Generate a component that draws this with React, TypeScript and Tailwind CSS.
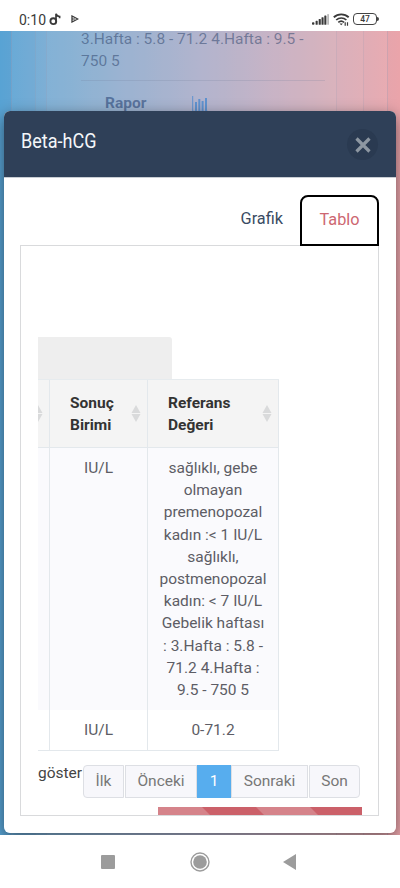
import { ReactNode } from "react";
import clsx from "clsx";

const SortIcon = ({ className }: { className?: string }) => (
  <svg
    viewBox="0 0 10 17"
    className={clsx("h-[17px] w-[10px] shrink-0 fill-[#d9dadb]", className)}
  >
    <path d="M5 0 9.5 8h-9zM5 17 .5 9h9z" />
  </svg>
);

const StatusBar = () => (
  <header className="flex h-[31px] shrink-0 items-start bg-white pl-[19px] pr-[21px] text-[#3a3a3a]">
    <span className="mt-[10px] w-[30px] text-[14px] leading-[20px] whitespace-nowrap">
      0:10
    </span>
    <svg viewBox="0 0 12 13" className="mt-[13px] h-[13px] w-3" fill="none" stroke="currentColor">
      <circle cx="4.3" cy="8.2" r="2.9" strokeWidth="1.9" />
      <path d="M7 8.5V.8c.5 1.7 1.7 2.6 3.6 2.7v1.8" strokeWidth="1.7" />
    </svg>
    <svg viewBox="0 0 8 8" className="mt-[15px] ml-[10px] h-2 w-2" fill="none" stroke="currentColor">
      <path d="M1 1v6l5.8-3z" strokeWidth="1.3" />
      <path d="M1 4h3" strokeWidth="1" />
    </svg>
    <div className="flex-1" />
    <svg viewBox="0 0 18 12" className="mt-[14px] h-3 w-[18px]" fill="currentColor">
      <rect x="0" y="8.3" width="2.4" height="2.5" rx=".8" />
      <rect x="3.6" y="6.8" width="2.1" height="4" rx=".6" />
      <rect x="6.7" y="5" width="2.1" height="5.8" rx=".6" />
      <rect x="9.5" y="3.2" width="2.1" height="7.6" rx=".6" />
      <rect x="12.3" y="1.5" width="2.1" height="9.3" rx=".6" />
      <rect x="15.2" y="0" width="1.8" height="10.8" rx=".6" opacity=".35" />
    </svg>
    <svg viewBox="0 0 18 14" className="mt-[13px] ml-[3px] h-[14px] w-[18px]" fill="none" stroke="currentColor">
      <path d="M.8 4.3a11 11 0 0 1 14.9 0" strokeWidth="1.9" />
      <path d="M3.2 7a7.5 7.5 0 0 1 10.2 0" strokeWidth="1.7" />
      <path d="M5.3 9.4a4.3 4.3 0 0 1 5.8 0" strokeWidth="1.6" />
      <path d="m6.5 10.6 1.7 1.6 1.7-1.6z" fill="currentColor" stroke="none" />
      <path d="M12.2 9.2v3.5M14.5 9.2v3.5" strokeWidth="1.2" />
    </svg>
    <div className="mt-[13px] ml-[2px] flex items-center">
      <div className="flex h-3 w-[24px] items-center justify-center rounded-[4px] border-[1.5px] border-[#444] text-[8.5px] leading-none font-medium">
        47
      </div>
      <div className="h-1 w-[2px] rounded-r bg-[#444]" />
    </div>
  </header>
);

const PageBehind = () => (
  <div className="absolute inset-0 flex bg-linear-to-r from-[#58a3d4] via-[#a5a8c6] to-[#eaa4aa]">
    <div className="flex w-full pr-3 pl-[11px]">
      <div className="flex w-full border-x border-[#8f8fa84d] bg-white/8 pr-[23px] pl-[23px]">
        <div className="flex w-full border-x border-[#8f8fa833] bg-white/4 pr-[26px] pl-[10px]">
          <div className="w-full border-x border-[#8f8fa833] bg-white/4 pr-[11px] pl-[11px] text-[15.5px] text-[#2e446c88]">
            <p className="ml-[23px] h-4 leading-[16px] whitespace-nowrap">
              3.Hafta : 5.8 - 71.2 4.Hafta : 9.5 -
            </p>
            <p className="ml-[23px] pt-[3px] leading-[22px]">750 5</p>
            <div className="mt-[8px] ml-[23px] flex border-t border-[#70779533] pt-[11px] pl-6 leading-[22px]">
              <b className="w-[87px] font-bold text-[#2b487999]">Rapor</b>
              <svg viewBox="0 0 16 16" className="mt-[4px] h-4 w-4" fill="none" stroke="#5f92cf">
                <path d="M.7 0v15.3H16" strokeWidth="1" />
                <path d="M4 15V6M7.3 15V3M10.6 15V5M14 15V2" strokeWidth="2" />
              </svg>
            </div>
          </div>
        </div>
      </div>
    </div>
  </div>
);

const Th = ({ children }: { children: ReactNode }) => (
  <th className="border-r border-b border-[#e3e8ec] bg-[#f4f4f4] p-0">
    <div className="flex items-center justify-between pr-[6px] pl-5 text-left leading-[22px] font-bold text-[#333]">
      <span>{children}</span>
      <SortIcon />
    </div>
  </th>
);

const rows = [
  {
    unit: "IU/L",
    reference: [
      "sağlıklı, gebe",
      "olmayan",
      "premenopozal",
      "kadın :< 1 IU/L",
      "sağlıklı,",
      "postmenopozal",
      "kadın: < 7 IU/L",
      "Gebelik haftası",
      ": 3.Hafta : 5.8 -",
      "71.2 4.Hafta :",
      "9.5 - 750 5",
    ],
  },
  { unit: "IU/L", reference: ["0-71.2"] },
];

const ResultTable = () => (
  <table className="w-[241px] table-fixed border-separate border-spacing-0 border-t border-[#e6ebee] text-[15.5px] leading-[22.2px]">
    <colgroup>
      <col className="w-[12px]" />
      <col className="w-[98px]" />
      <col className="w-[131px]" />
    </colgroup>
    <thead>
      <tr className="h-[68px]">
        <th className="overflow-hidden border-r border-b border-[#e3e8ec] bg-[#f4f4f4] p-0">
          <SortIcon className="-ml-[5px]" />
        </th>
        <Th>
          Sonuç
          <br />
          Birimi
        </Th>
        <Th>
          Referans
          <br />
          Değeri
        </Th>
      </tr>
    </thead>
    <tbody className="text-center text-[#5d5d65]">
      {rows.map((row, idx) => {
        const last = idx === rows.length - 1;
        const cell = clsx(
          "border-r border-[#e3e8ec] p-0 align-top",
          last ? "h-[41px] border-b pt-[9px]" : "h-[262px] bg-[#fafafd] pt-[9px]"
        );
        return (
          <tr key={idx}>
            <td className={cell} />
            <td className={cell}>{row.unit}</td>
            <td className={clsx(cell, "whitespace-nowrap")}>
              {row.reference.map((line) => (
                <div key={line}>{line}</div>
              ))}
            </td>
          </tr>
        );
      })}
    </tbody>
  </table>
);

const pages = [
  { label: "İlk", className: "w-[41px] rounded-l-[4px]" },
  { label: "Önceki", className: "ml-px w-[72px]" },
  { label: "1", className: "w-[34px] border-[#57adee] bg-[#57adee] text-white" },
  { label: "Sonraki", className: "w-[77px]" },
  { label: "Son", className: "ml-px w-[51px] rounded-r-[4px]" },
];

const Pagination = () => (
  <div className="mt-[14px] flex items-start text-[15.5px]">
    <span className="-mt-[3px] w-[45px] leading-[22px] whitespace-nowrap text-[#444]">göster</span>
    <div className="flex">
      {pages.map((page) => (
        <button
          key={page.label}
          className={clsx(
            "flex h-[33px] items-center justify-center border",
            page.label !== "1" && "border-[#dddfe4] bg-[#f7f7fb] text-[#777]",
            page.className
          )}
        >
          {page.label}
        </button>
      ))}
    </div>
  </div>
);

const Modal = () => (
  <section className="relative flex h-[722px] w-full flex-col overflow-hidden rounded-[6px] bg-white">
    <div className="flex h-[67px] shrink-0 items-start justify-between border-b border-[#c9ced4] bg-[#2f4058] pr-[18px] pl-[17px]">
      <h2 className="mt-[17px] w-[76px] origin-left scale-x-[0.86] text-[21px] leading-[26px] whitespace-nowrap text-[#f4f7fa]">
        Beta-hCG
      </h2>
      <button className="mt-[18px] flex size-[31px] items-center justify-center rounded-full bg-[#2a3a51]">
        <svg viewBox="0 0 16 16" className="size-4" stroke="#8d97a2" strokeWidth="3.2">
          <path d="m1.5 1.5 13 13M14.5 1.500l-13 13" />
        </svg>
      </button>
    </div>
    <div className="flex flex-col pr-[17px] pl-4 pt-[17px]">
      <nav className="relative -mb-px flex h-[51px] justify-end text-[16.3px]">
        <a className="pt-3 pr-[17px] leading-[24px] text-[#3a4b63]">Grafik</a>
        <a className="w-[79px] rounded-t-[8px] border-2 border-black bg-white pt-[11px] text-center leading-[24px] text-[#cd6771]">
          Tablo
        </a>
      </nav>
      <div className="h-[571px] overflow-hidden border border-[#d9dadc] pl-[17px]">
        <div className="mt-[91px] h-[42px] w-[134px] rounded-tr-[3px] bg-[#eee]" />
        <ResultTable />
        <Pagination />
        <div className="mt-[9px] ml-[120px] h-5 w-[204px] overflow-hidden bg-[#cb6069]">
          <svg viewBox="0 0 204 20" className="h-5 w-[204px]" fill="#d5838a">
            <path d="M0 0h44l20 20H0zM98 0h54l20 20h-54z" />
          </svg>
        </div>
      </div>
    </div>
  </section>
);

const SystemNav = () => (
  <footer className="flex h-[53px] shrink-0 items-center justify-between bg-white pr-[104px] pl-[101px] text-[#9c9c9c]">
    <div className="size-[14px] rounded-[1px] bg-[#9c9c9c]" />
    <svg viewBox="0 0 20 20" className="ml-px size-5">
      <circle cx="10" cy="10" r="9" fill="none" stroke="currentColor" strokeWidth="1.4" />
      <circle cx="10" cy="10" r="6.8" fill="currentColor" />
    </svg>
    <svg viewBox="0 0 13 16" className="h-4 w-[13px]" fill="currentColor">
      <path d="M13 0v16L0 8z" />
    </svg>
  </footer>
);

export default function App() {
  return (
    <div className="flex h-[888px] w-[400px] flex-col overflow-hidden bg-white font-['Roboto',sans-serif]">
      <StatusBar />
      <main className="relative h-[804px] overflow-hidden">
        <PageBehind />
        <div className="relative px-1 pt-[80px]">
          <div className="rounded-[6px] shadow-[0_5px_15px_rgba(0,0,0,0.5)]">
            <Modal />
          </div>
        </div>
      </main>
      <SystemNav />
    </div>
  );
}
